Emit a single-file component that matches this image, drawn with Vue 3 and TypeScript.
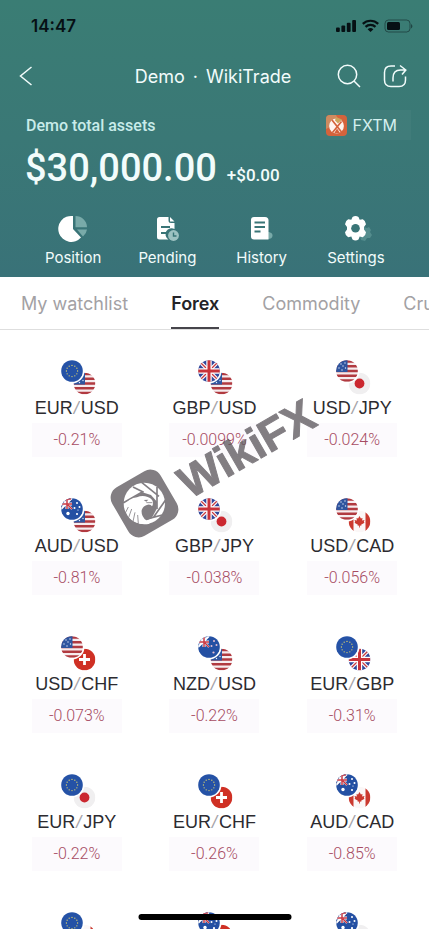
<script setup lang="ts">
type Currency = 'EUR' | 'USD' | 'GBP' | 'JPY' | 'AUD' | 'CAD' | 'CHF' | 'NZD'

interface Pair {
  base: Currency
  quote: Currency
  change?: string
}

const tabs: string[] = ['My watchlist', 'Forex', 'Commodity', 'Crude']
const activeTab = 'Forex'

const actions: { id: string; label: string }[] = [
  { id: 'position', label: 'Position' },
  { id: 'pending', label: 'Pending' },
  { id: 'history', label: 'History' },
  { id: 'settings', label: 'Settings' },
]

const pairs: Pair[] = [
  { base: 'EUR', quote: 'USD', change: '-0.21%' },
  { base: 'GBP', quote: 'USD', change: '-0.0099%' },
  { base: 'USD', quote: 'JPY', change: '-0.024%' },
  { base: 'AUD', quote: 'USD', change: '-0.81%' },
  { base: 'GBP', quote: 'JPY', change: '-0.038%' },
  { base: 'USD', quote: 'CAD', change: '-0.056%' },
  { base: 'USD', quote: 'CHF', change: '-0.073%' },
  { base: 'NZD', quote: 'USD', change: '-0.22%' },
  { base: 'EUR', quote: 'GBP', change: '-0.31%' },
  { base: 'EUR', quote: 'JPY', change: '-0.22%' },
  { base: 'EUR', quote: 'CHF', change: '-0.26%' },
  { base: 'AUD', quote: 'CAD', change: '-0.85%' },
  { base: 'EUR', quote: 'CAD' },
  { base: 'AUD', quote: 'CHF' },
  { base: 'AUD', quote: 'JPY' },
]

const euStars = Array.from({ length: 12 }, (_, i) => {
  const a = (i * Math.PI) / 6
  return { x: 11 + 5.6 * Math.sin(a), y: 11 - 5.6 * Math.cos(a) }
})
</script>

<template>
  <div class="screen">
    <svg class="defs" aria-hidden="true">
      <defs>
        <clipPath id="disc"><circle cx="11" cy="11" r="10.8" /></clipPath>
        <symbol id="flag-EUR" viewBox="0 0 22 22">
          <circle cx="11" cy="11" r="10.8" fill="#2552a6" />
          <circle v-for="(s, i) in euStars" :key="i" :cx="s.x" :cy="s.y" r="0.65" fill="#e2d56a" />
        </symbol>
        <symbol id="flag-USD" viewBox="0 0 22 22">
          <g clip-path="url(#disc)">
            <rect width="22" height="22" fill="#f6ecee" />
            <path d="M0 1.6H22M0 6.3H22M0 11H22M0 15.7H22M0 20.4H22" stroke="#b13a40" stroke-width="2.5" />
            <rect width="11.5" height="12" fill="#2f559f" />
            <g fill="#dfe8f8">
              <circle cx="5" cy="4" r=".7" /><circle cx="9" cy="3" r=".7" /><circle cx="7" cy="6" r=".7" />
              <circle cx="3" cy="8" r=".7" /><circle cx="9.500" cy="8" r=".7" /><circle cx="6" cy="10" r=".7" />
            </g>
          </g>
        </symbol>
        <symbol id="flag-GBP" viewBox="0 0 22 22">
          <g clip-path="url(#disc)">
            <rect width="22" height="22" fill="#31479a" />
            <path d="M0 0L22 22M22 0L0 22" stroke="#fff" stroke-width="3.6" />
            <path d="M0 0L22 22M22 0L0 22" stroke="#c83a40" stroke-width="1.3" />
            <path d="M11 0V22M0 11H22" stroke="#fff" stroke-width="5.4" />
            <path d="M11 0V22M0 11H22" stroke="#c8333a" stroke-width="3" />
          </g>
        </symbol>
        <symbol id="flag-JPY" viewBox="0 0 22 22">
          <circle cx="11" cy="11" r="10.8" fill="#f0eff0" />
          <circle cx="11" cy="11" r="4.9" fill="#cb2830" />
        </symbol>
        <symbol id="flag-AUD" viewBox="0 0 22 22">
          <g clip-path="url(#disc)">
            <rect width="22" height="22" fill="#2450a3" />
            <path d="M0 0H11V11H0Z" fill="#2a468f" />
            <path d="M0 0L11 11M11 0L0 11" stroke="#fff" stroke-width="2" />
            <path d="M6 0V11M0 6H11" stroke="#fff" stroke-width="3" />
            <path d="M6 0V11M0 6H11M7 7L11 11" stroke="#c93a44" stroke-width="1.5" />
            <path d="M1 3Q4 0 10 .8" stroke="#c93a44" stroke-width="2" fill="none" />
            <g fill="#fff">
              <circle cx="7" cy="15.500" r="1.7" /><circle cx="16" cy="5" r="1" /><circle cx="13.500" cy="10" r="1" />
              <circle cx="18.500" cy="9" r="1" /><circle cx="16" cy="16" r="1.1" /><circle cx="17" cy="12" r=".6" />
            </g>
          </g>
        </symbol>
        <symbol id="flag-NZD" viewBox="0 0 22 22">
          <g clip-path="url(#disc)">
            <rect width="22" height="22" fill="#2450a3" />
            <path d="M0 0L11 11M11 0L0 11" stroke="#fff" stroke-width="2" />
            <path d="M6 0V11M0 6H11" stroke="#fff" stroke-width="3" />
            <path d="M6 0V11M0 6H11M7 7L11 11" stroke="#c93a44" stroke-width="1.5" />
            <g fill="#e7bfd0">
              <circle cx="16" cy="5" r="1" /><circle cx="13.500" cy="10" r="1" />
              <circle cx="18.500" cy="9" r="1" /><circle cx="15.500" cy="16.500" r="1.1" />
            </g>
          </g>
        </symbol>
        <symbol id="flag-CAD" viewBox="0 0 22 22">
          <g clip-path="url(#disc)">
            <rect width="22" height="22" fill="#fbf7f7" />
            <path d="M0 0H5V22H0ZM17 0H22V22H17Z" fill="#cb3a30" />
            <path d="M11 5.500L12.400 8L14 7.400L13.600 10L16 9.500L15.300 11.600L16 12.200L12.600 14.200L12.900 15.200L11.400 15V17H10.600V15L9.100 15.200L9.400 14.200L6 12.200L6.700 11.600L6 9.500L8.400 10L8 7.400L9.600 8Z" fill="#cb3a30" />
          </g>
        </symbol>
        <symbol id="flag-CHF" viewBox="0 0 22 22">
          <circle cx="11" cy="11" r="10.8" fill="#cf3024" />
          <path d="M11 5.500V16.500M5.500 11H16.500" stroke="#fff" stroke-width="2.8" />
        </symbol>
      </defs>
    </svg>

    <header class="hero">
      <div class="status">
        <span class="time">14:47</span>
        <svg width="78" height="14" viewBox="0 0 78 14" aria-hidden="true">
          <g fill="#061014">
            <rect x="1" y="8.500" width="3.800" height="4.500" rx="1" />
            <rect x="6.400" y="6.500" width="3.800" height="6.500" rx="1" />
            <rect x="11.800" y="3.800" width="3.800" height="9.200" rx="1" />
            <rect x="17.200" y="1" width="3.800" height="12" rx="1" />
            <rect x="52" y="3" width="13" height="8" rx="1.500" />
            <path d="M35.500 13L32.600 10.200A4.300 4.300 0 0 1 38.400 10.200Z" />
            <path d="M76 5V9.500C77.900 8.700 77.900 5.800 76 5Z" opacity=".5" />
          </g>
          <path d="M27.800 4.900A11 11 0 0 1 43.200 4.900M30.500 7.900A7.200 7.200 0 0 1 40.500 7.900" fill="none" stroke="#061014" stroke-width="2.200" />
          <rect x="50" y="1" width="25" height="12" rx="3.500" fill="none" stroke="#061014" stroke-opacity=".45" />
        </svg>
      </div>

      <nav class="nav">
        <button class="icon-button" type="button" aria-label="Back">
          <svg width="14" height="20" viewBox="0 0 14 20"><path d="M12.500 1L1.500 10L12.500 19" /></svg>
        </button>
        <h1><span>Demo</span><span>·</span><span>WikiTrade</span></h1>
        <div class="nav-end">
          <button class="icon-button" type="button" aria-label="Search">
            <svg width="24" height="24" viewBox="0 0 24 24"><circle cx="10.500" cy="10.500" r="9.200" /><path d="M17 17L23 23" /></svg>
          </button>
          <button class="icon-button" type="button" aria-label="Share">
            <svg width="24" height="24" viewBox="0 0 24 24">
              <path d="M12 2H8Q1.500 2 1.500 8.500V16Q1.500 22.500 8 22.500H16Q22.500 22.500 22.500 16V12.500" />
              <path d="M10 17.500V14Q10 6 17.500 6H22.500M17 1.500L22.800 6L19 10.500" />
            </svg>
          </button>
        </div>
      </nav>

      <div class="account">
        <span class="caption">Demo total assets</span>
        <button class="broker" type="button">
          <svg width="21" height="21" viewBox="0 0 21 21" aria-hidden="true">
            <rect width="21" height="21" rx="4" fill="#d5633c" />
            <path d="M0 4Q0 0 4 0H10L12 4L4 12L0 14Z" fill="#cf8b60" />
            <circle cx="10.500" cy="11" r="7.400" fill="#fff4ef" />
            <path d="M10 2L16 4.500L12 8.500L9 5.500Z" fill="#cda45c" />
            <path d="M6 5L15.500 17M15.500 6.500L6.500 17.500" stroke="#d5633c" stroke-width="1.700" />
            <path d="M8 18.500L11 13.500L14 18Z" fill="#d5633c" />
          </svg>
          <span>FXTM</span>
        </button>
      </div>

      <div class="total">
        <strong>$30,000.00</strong>
        <span>+$0.00</span>
      </div>

      <div class="actions">
        <button v-for="a in actions" :key="a.id" class="action" type="button">
          <svg width="34" height="28" viewBox="0 0 34 28" aria-hidden="true">
            <template v-if="a.id === 'position'">
              <path d="M17 1V14L25 22.500A13 13 0 1 1 17 1Z" fill="#fff" />
              <path d="M19.500 1A11.500 11.500 0 0 1 31 12.200H19.500ZM21 14.500H31Q30.500 18.500 27 21.500Z" fill="#79aaa9" />
            </template>
            <template v-else-if="a.id === 'pending'">
              <path d="M9.500 2H18.500V5.500Q18.500 8 21 8H24.500V14A6 6 0 0 0 18.500 24.500H9.500Q7 24.500 7 22V4.500Q7 2 9.500 2ZM20 2L24.500 6.500H20Z" fill="#fff" />
              <path d="M11 12H20M11 18H16.500" stroke="#397577" stroke-width="2" />
              <circle cx="23.500" cy="20.500" r="5.400" fill="#9dc2c1" />
              <path d="M23.500 17.500V21H26.500" fill="none" stroke="#397577" stroke-width="1.400" />
            </template>
            <template v-else-if="a.id === 'history'">
              <path d="M22 17H24Q28 18 27.500 21Q27 24.500 22 24Z" fill="#79aaa9" />
              <path d="M9 2H20Q23.500 2 23.500 5.500V24.500H9Q6 24.500 6 21.500V5Q6 2 9 2Z" fill="#fff" />
              <path d="M9.500 7.500H20M9.500 12H20M9.500 16.500H15.500" stroke="#397577" stroke-width="1.800" />
            </template>
            <template v-else>
              <path d="M25 12L28 13L30 12L32 15L31 17L33 20L31 23L28 23L26 26L22 25L21 21Z" fill="#548d8e" />
              <path d="M13.500 2.800Q16.500 .8 19.500 2.800L20.700 5.600L23.800 5Q26.800 6.600 27 10L25 12.800V15.200L27 18Q26.800 21.400 23.800 23L20.700 22.400L19.500 25.200Q16.500 27.200 13.500 25.200L12.300 22.400L9.200 23Q6.200 21.400 6 18L8 15.200V12.800L6 10Q6.200 6.600 9.200 5L12.300 5.600Z" transform="translate(0 -.8)" fill="#fff" />
              <circle cx="16.500" cy="13.200" r="4.300" fill="#397577" />
            </template>
          </svg>
          <span>{{ a.label }}</span>
        </button>
      </div>
    </header>

    <nav class="tabs">
      <button v-for="t in tabs" :key="t" type="button" :class="{ active: t === activeTab }">{{ t }}</button>
    </nav>

    <main class="grid">
      <button v-for="p in pairs" :key="p.base + p.quote" class="pair" type="button">
        <svg class="flags" width="38" height="36" viewBox="0 0 38 36" aria-hidden="true">
          <use :href="'#flag-' + p.quote" x="15.500" y="12.500" width="22" height="22" />
          <circle cx="14" cy="11" r="12.500" fill="#fff" />
          <use :href="'#flag-' + p.base" x="3" y="0" width="22" height="22" />
        </svg>
        <span v-if="p.change" class="symbol">{{ p.base }}<i>/</i>{{ p.quote }}</span>
        <span v-if="p.change" class="change">{{ p.change }}</span>
      </button>
    </main>

    <svg class="watermark" width="230" height="160" viewBox="0 0 230 160" aria-hidden="true">
      <defs>
        <mask id="emblem">
          <rect width="230" height="160" fill="#fff" />
          <g transform="translate(0 75) scale(.3333)">
            <circle cx="118" cy="115" r="62" fill="#000" />
            <path d="M74 104L112 82L138 90L156 110L155 132L140 160L120 168L96 150Z" fill="#fff" />
            <path d="M54 114L113 80M84 66L116 82M110 52L162 94M156 66V132M184 102L146 156M172 150L118 164" stroke="#fff" stroke-width="5" fill="none" />
            <path d="M57 124Q72 98 96 97Q112 89 128 96Q144 102 144 113Q144 120 141 124Q137 117 128 119Q114 122 110 136Q108 154 124 166L134 176Q96 184 70 156Z" fill="#000" />
            <path d="M116 105L130 104L124 110Z" fill="#fff" />
            <path d="M60 146L70 126M70 160L80 132M84 170L90 142M100 176L98 150M124 113L142 113" stroke="#fff" stroke-width="2.500" />
          </g>
        </mask>
      </defs>
      <g mask="url(#emblem)">
        <rect x="-28" y="-28" width="56" height="56" rx="12" transform="translate(39.500 113.500) rotate(-30)" />
      </g>
      <text x="41" y="19" transform="translate(39.500 113.500) rotate(-30)">WikiFX</text>
    </svg>

    <div class="home-bar"></div>
  </div>
</template>

<style>
body {
  margin: 0;
  background: #fff;
}
</style>

<style scoped>
.screen {
  position: relative;
  height: 100vh;
  overflow: hidden;
  background: #fff;
  color: #2c2b30;
  font-family: Inter, "Liberation Sans", sans-serif;
}
.defs {
  position: absolute;
  width: 0;
  height: 0;
}
button {
  margin: 0;
  padding: 0;
  border: 0;
  background: none;
  color: inherit;
  font: inherit;
  cursor: pointer;
}
.hero {
  height: 277px;
  background: linear-gradient(#3a7d74, #3a7876 50%, #397278);
  color: #f2fcfb;
}
.status {
  display: flex;
  align-items: center;
  justify-content: space-between;
  height: 52px;
  padding: 0 16px 0 31px;
}
.time {
  color: #061014;
  font-size: 17px;
  font-weight: 600;
}
.nav {
  display: grid;
  grid-template-columns: 1fr auto 1fr;
  align-items: center;
  height: 48px;
  padding: 0 22px 0 19px;
}
.nav h1 {
  display: flex;
  gap: 8px;
  margin: 0;
  font-size: 18px;
  font-weight: 400;
}
.nav-end {
  display: flex;
  justify-content: flex-end;
  gap: 22px;
}
.icon-button {
  display: flex;
}
.icon-button svg {
  fill: none;
  stroke: #f2fcfb;
  stroke-width: 1.5;
}
.account {
  display: flex;
  align-items: center;
  justify-content: space-between;
  height: 50px;
  padding: 0 18px 0 26px;
}
.caption {
  color: #c9ecea;
  font-family: Roboto, sans-serif;
  font-size: 16px;
  font-weight: 500;
}
.broker {
  display: flex;
  align-items: center;
  gap: 5px;
  height: 30px;
  padding: 0 14px 0 6px;
  background: rgba(255, 255, 255, 0.03);
  color: #d5f0ef;
  font-size: 16px;
}
.total {
  display: flex;
  align-items: baseline;
  gap: 10px;
  height: 62px;
  padding-left: 25px;
  font-family: Roboto, sans-serif;
  line-height: 36px;
}
.total strong {
  font-size: 38px;
  font-weight: 500;
}
.total span {
  font-size: 17px;
  font-weight: 500;
}
.actions {
  display: grid;
  grid-template-columns: repeat(4, 1fr);
  padding: 3px 26px 0;
}
.action {
  display: flex;
  flex-direction: column;
  align-items: center;
  gap: 4px;
  font-size: 15px;
  line-height: 22px;
}
.tabs {
  display: flex;
  gap: 43px;
  height: 52px;
  padding-left: 21px;
  border-bottom: 1px solid #dedede;
  overflow: hidden;
  white-space: nowrap;
}
.tabs button {
  flex: none;
  padding-top: 3px;
  border-bottom: 2px solid transparent;
  color: #a3a1a4;
  font-size: 18px;
}
.tabs .active {
  border-color: #46454b;
  color: #242328;
  font-weight: 600;
}
.grid {
  display: grid;
  grid-template-columns: repeat(3, 1fr);
  row-gap: 41px;
  padding: 30px 8px 0;
}
.pair {
  display: flex;
  flex-direction: column;
  align-items: center;
}
.flags {
  display: block;
}
.symbol {
  font-family: "Liberation Sans", Arial, sans-serif;
  font-size: 18px;
  line-height: 24px;
}
.symbol i {
  padding: 0 2px 0 1px;
  color: #a5a3a8;
}
.change {
  width: 90px;
  margin-top: 3px;
  background: #fcfafd;
  color: #a74c63;
  font-family: Roboto, sans-serif;
  font-size: 16px;
  font-weight: 300;
  line-height: 34px;
}
.watermark {
  position: absolute;
  top: 390px;
  left: 105px;
  fill: #5b565c;
  opacity: 0.76;
  pointer-events: none;
}
.watermark text {
  font-family: "Liberation Sans", Arial, sans-serif;
  font-size: 45px;
  font-weight: 700;
  stroke: #5b565c;
  stroke-width: 1;
  stroke-linejoin: round;
}
.home-bar {
  position: absolute;
  bottom: 9px;
  left: 50%;
  width: 153px;
  height: 6px;
  border-radius: 3px;
  background: #000;
  transform: translateX(-50%);
}
</style>
